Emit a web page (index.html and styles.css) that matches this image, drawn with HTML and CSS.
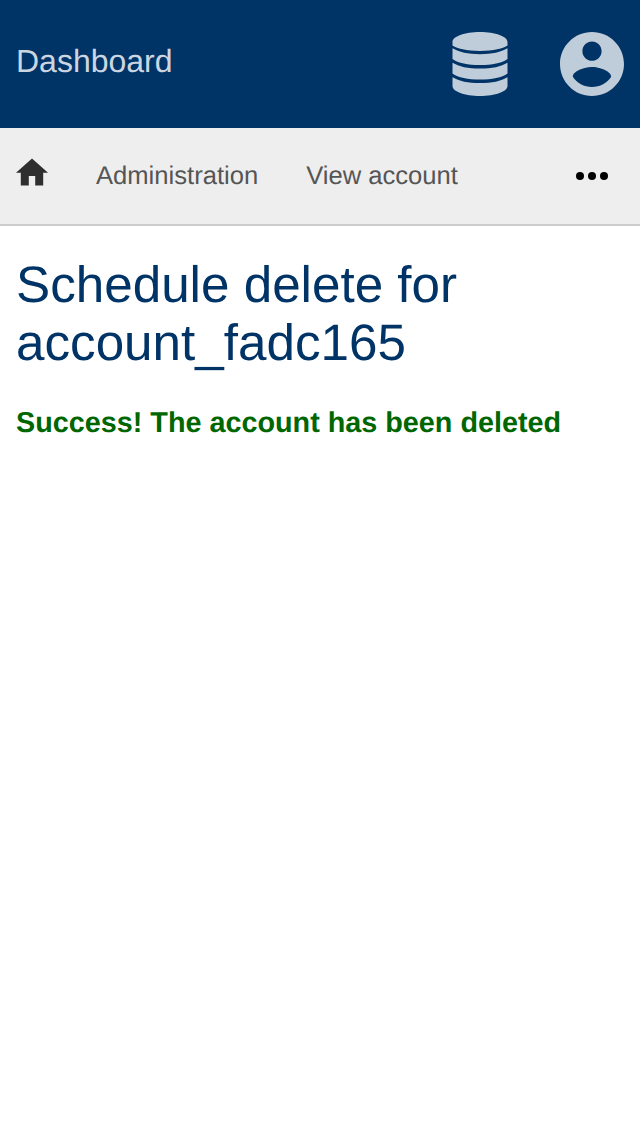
FILE: index.html
```
<!DOCTYPE html>
<html lang="en">
<head>
<meta charset="utf-8">
<title>Schedule delete</title>
<link rel="stylesheet" href="styles.css">
</head>
<body>
<header class="topbar">
  <a class="brand">Dashboard</a>
  <div class="actions">
    <svg class="icon-lg" viewBox="0 0 64 64"><path d="M4.500 10C4.500 4.500 16.500 0 32 0s27.500 4.500 27.500 10v3.500C56 16.500 45 18.900 32 18.900S8 16.500 4.500 13.500zM4.500 16.300C11 20.200 20 22.200 32 22.200s21-2 27.500-5.900V27C54 31 44 33 32 33S10 31 4.500 27zM4.500 30.700C11 34.600 20 36.600 32 36.600s21-2 27.500-5.900v10.700C54 45.400 44 47.400 32 47.400S10 45.400 4.500 41.400zM4.500 45.200C11 49.100 20 51.100 32 51.100s21-2 27.500-5.900V54c0 5.500-12 10-27.500 10S4.500 59.500 4.500 54z"/></svg>
    <svg class="icon-lg" viewBox="2 2 20 20"><path d="M12 2C6.480 2 2 6.480 2 12s4.480 10 10 10 10-4.480 10-10S17.520 2 12 2zm0 3c1.660 0 3 1.340 3 3s-1.340 3-3 3-3-1.340-3-3 1.340-3 3-3zm0 14.200c-2.500 0-4.710-1.280-6-3.220.03-1.990 4-3.080 6-3.080 1.990 0 5.970 1.090 6 3.080-1.290 1.940-3.500 3.220-6 3.220z"/></svg>
  </div>
</header>
<nav class="crumbs">
  <svg class="home" viewBox="2 1.500 20 20"><path d="M10 20v-6h4v6h5v-8h3L12 3 2 12h3v8z"/></svg>
  <a>Administration</a>
  <a>View account</a>
  <svg class="more" viewBox="0 0 32 8"><circle cx="4" cy="4" r="4"/><circle cx="16" cy="4" r="4"/><circle cx="28" cy="4" r="4"/></svg>
</nav>
<main class="content">
  <h1>Schedule delete for account_fadc165</h1>
  <p class="success">Success! The account has been deleted</p>
</main>
</body>
</html>
```
FILE: styles.css
```
body { margin: 0; background: #fff; font-family: "Liberation Sans", Arial, sans-serif; text-rendering: geometricPrecision; }
.topbar { display: flex; justify-content: space-between; box-sizing: border-box; height: 128px; padding: 32px 16px; background: #036; }
.brand { color: #ccd6e0; font-size: 32px; line-height: 58px; }
.actions { display: flex; gap: 48px; }
.icon-lg { width: 64px; height: 64px; fill: #bfccd9; }
.crumbs { display: flex; align-items: center; gap: 48px; box-sizing: border-box; height: 98px; padding: 0 32px 0 16px; background: #eee; border-bottom: 2px solid #ccc; color: #555; font-size: 25.600px; line-height: 30px; }
.home { width: 32px; height: 32px; margin-bottom: 8px; fill: #2e2e2e; }
.more { width: 32px; height: 8px; margin-left: auto; fill: #000; }
.content { padding: 30px 16px; }
.content h1 { margin: 0; color: #036; font-size: 51.200px; font-weight: 400; line-height: 58px; }
.success { margin: 34px 0 0; color: #060; font-size: 28.770px; font-weight: 700; line-height: 34px; }
```
